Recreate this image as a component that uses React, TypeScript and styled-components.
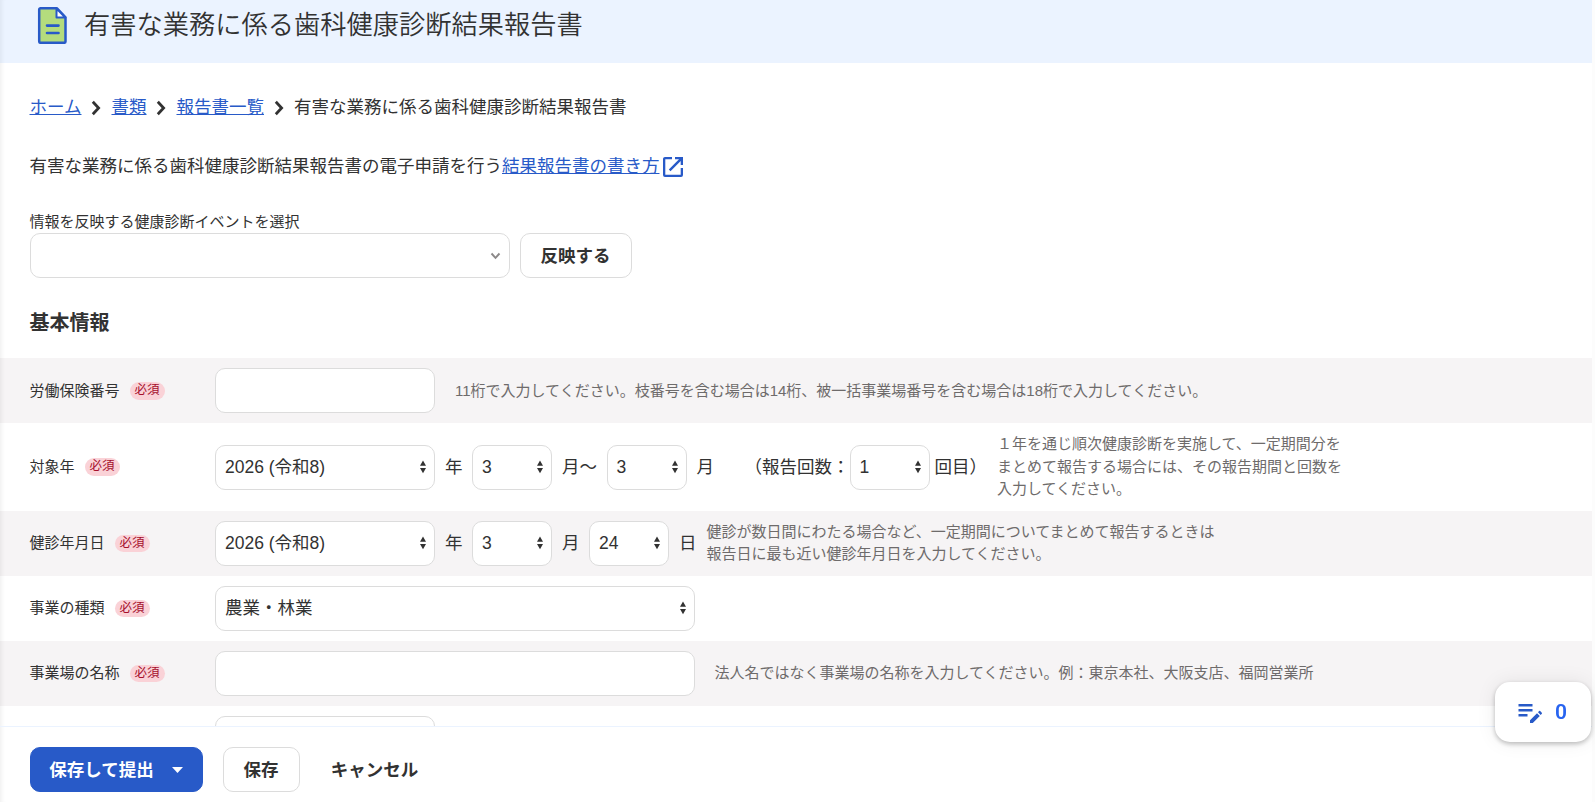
import React from "react";
import styled, { createGlobalStyle, css } from "styled-components";

const GlobalStyle = createGlobalStyle`
  *, *::before, *::after { box-sizing: border-box; }
  html, body { margin: 0; height: 100%; overflow: hidden; background: #fcfcfc; }
  body {
    font-family: "Liberation Sans", "Noto Sans CJK JP", sans-serif;
    font-size: 17.5px;
    color: #323232;
  }
`;

const Page = styled.div`
  display: flex;
  flex-direction: column;
  width: 1592px;
  height: 802px;
  overflow: hidden;
  background: #fff;
  box-shadow: inset 5px 0 5px -4px rgba(0, 0, 0, 0.08);
`;

const Header = styled.header`
  flex: none;
  display: flex;
  align-items: flex-start;
  gap: 16px;
  height: 63px;
  padding: 6px 36px 0;
  background: rgba(55, 135, 255, 0.1);
`;

const Title = styled.h1`
  margin: -1px 0 0;
  font-family: "Noto Sans CJK JP", sans-serif;
  font-size: 26.25px;
  font-weight: 350;
  line-height: 36px;
`;

const Content = styled.main`
  flex: 1;
  min-height: 0;
  overflow: hidden;
`;

const Breadcrumb = styled.nav`
  display: flex;
  align-items: center;
  height: 26px;
  margin: 31px 29.5px 0;
  line-height: 26px;

  svg { margin: 1px 10px 0; }
`;

const Link = styled.a`
  color: #285ac8;
  text-decoration: underline;
`;

const Lead = styled.p`
  display: flex;
  align-items: center;
  height: 26px;
  margin: 33px 29.5px 0;
  line-height: 26px;

  svg { margin: 2px 0 0 1px; }
`;

const EventLabel = styled.label`
  display: block;
  margin: 32px 29.5px 0;
  font-size: 15px;
  line-height: 22px;
`;

const EventRow = styled.div`
  display: flex;
  gap: 10px;
  margin: 0 30px;
`;

const SectionTitle = styled.h2`
  margin: 30px 29.5px 20.4px;
  font-size: 20px;
  font-weight: 700;
  line-height: 30px;
`;

const Row = styled.div<{ $shaded?: boolean }>`
  display: flex;
  align-items: center;
  padding: 10px 0 10px 29.5px;
  background: ${(p) => (p.$shaded ? "rgba(55, 5, 15, 0.042)" : "transparent")};
`;

const RowLabel = styled.div`
  display: flex;
  align-items: center;
  gap: 10px;
  width: 185.5px;
  font-size: 15px;
  line-height: 22px;
`;

const Required = styled.span`
  width: 35px;
  height: 17.5px;
  border-radius: 9px;
  background: #fad2d7;
  color: #a50f2d;
  font-size: 12.5px;
  line-height: 16px;
  text-align: center;
`;

const field = css`
  height: 45px;
  border: 1px solid #dcdcdc;
  border-radius: 10px;
  background: #fff;
`;

const Input = styled.input<{ $width: number }>`
  ${field}
  width: ${(p) => p.$width}px;
  padding: 0 10px;
  outline: none;
`;

const SelectBox = styled.div<{ $width: number }>`
  ${field}
  display: flex;
  align-items: center;
  justify-content: space-between;
  width: ${(p) => p.$width}px;
  padding: 0 7px 0 9px;
  line-height: 26px;
`;

const Unit = styled.span<{ $left?: number; $right?: number }>`
  margin-left: ${(p) => p.$left ?? 10}px;
  margin-right: ${(p) => p.$right ?? 9.5}px;
  line-height: 26px;
  white-space: nowrap;
`;

const Hint = styled.p<{ $left: number }>`
  margin: 0 0 0 ${(p) => p.$left}px;
  color: #6e6b6b;
  font-size: 15px;
  line-height: 22.5px;
`;

const Button = styled.button<{ $kind?: "primary" | "text"; $width: number }>`
  ${field}
  display: flex;
  align-items: center;
  justify-content: center;
  width: ${(p) => p.$width}px;
  padding: 0 1px 3px 0;
  color: #323232;
  font-family: inherit;
  font-size: 17.5px;
  font-weight: 700;
  ${(p) => p.$kind === "primary" && css`
    gap: 18px;
    border-color: #285ac8;
    background: #285ac8;
    color: #fff;

    svg { margin-top: 3px; }
  `}
  ${(p) => p.$kind === "text" && css`
    border-color: transparent;
    background: transparent;
  `}
`;

const Footer = styled.footer`
  flex: none;
  display: flex;
  height: 76px;
  padding: 20px 30px 0;
  border-top: 1px solid #ebf3ff;

  ${Button} + ${Button} { margin-left: 20px; }
`;

const MemoButton = styled.button`
  position: fixed;
  left: 1495px;
  top: 682px;
  display: flex;
  align-items: center;
  gap: 12px;
  width: 96px;
  height: 60px;
  padding: 0 0 0 22px;
  border: 0;
  border-radius: 15px;
  background: #fff;
  box-shadow: 0 0 20px rgba(0, 0, 0, 0.08), 0 2px 5px rgba(0, 0, 0, 0.25);
  color: #2864f0;
  font-family: Roboto, sans-serif;
  font-size: 21px;
  font-weight: 600;

  svg { margin-top: 3px; }
`;

const DocumentIcon = () => (
  <svg width="32" height="38" viewBox="0 0 32 38">
    <path d="M4.500 2.300H21l8.500 9V35.500a1.300 1.300 0 0 1-1.300 1.300H4.500a1.300 1.300 0 0 1-1.300-1.300V3.600a1.300 1.300 0 0 1 1.300-1.300z" fill="#b4dc7d" stroke="#285ac8" strokeWidth="2.500" strokeLinejoin="round" />
    <path d="M20.500 2.500v9h8.800z" fill="#fff" stroke="#285ac8" strokeWidth="2" strokeLinejoin="round" />
    <path d="M11 19.600h11.500M11 27h11.500" stroke="#285ac8" strokeWidth="2.600" strokeLinecap="round" />
  </svg>
);

const Chevron = () => (
  <svg width="10" height="16" viewBox="0 0 10 16">
    <path d="M1.800 1.800L7.600 8l-5.800 6.200" fill="none" stroke="#323232" strokeWidth="2.800" />
  </svg>
);

const ExternalIcon = () => (
  <svg width="24" height="24" viewBox="0 0 24 24" fill="#285ac8">
    <path d="M4 2h7v2.300H4.300v15.400h15.400V13H22v7a2 2 0 0 1-2 2H4a2 2 0 0 1-2-2V4c0-1.100.900-2 2-2zM14 2h8v8h-2.300V6L9.500 16.200 7.800 14.500 18 4.300h-4z" />
  </svg>
);

const DownIcon = () => (
  <svg width="12" height="8" viewBox="0 0 12 8">
    <path d="M1.500 1.500l4 4.300 4-4.300" fill="none" stroke="#8c8989" strokeWidth="1.900" />
  </svg>
);

const SortArrows = () => (
  <svg width="8" height="14" viewBox="0 0 8 14" fill="#323232">
    <path d="M4 .500L7 5.700H1zM4 13.300L1 8.100h6z" />
  </svg>
);

const CaretIcon = () => (
  <svg width="11" height="6" viewBox="0 0 11 6" fill="#fff">
    <path d="M0 0h11L5.500 6z" />
  </svg>
);

const MemoIcon = () => (
  <svg width="26" height="22" viewBox="0 0 26 22" fill="#285ac8">
    <path d="M1.500 1h14v2.500h-14zM1.500 6h14v2.500h-14zM1.500 11h9v2.500h-9zM13 17.200l7-7 2.800 2.800-7 7H13zM21 9.200l1.100-1.100a.8.8 0 0 1 1.100 0l1.600 1.600a.8.8 0 0 1 0 1.100l-1.100 1.100z" />
  </svg>
);

const Select = ({ width, value }: { width: number; value: string }) => (
  <SelectBox $width={width}>
    <span>{value}</span>
    <SortArrows />
  </SelectBox>
);

const Label = ({ text }: { text: string }) => (
  <RowLabel>
    {text}
    <Required>必須</Required>
  </RowLabel>
);

export default function App() {
  return (
    <>
      <GlobalStyle />
      <Page>
        <Header>
          <DocumentIcon />
          <Title>有害な業務に係る歯科健康診断結果報告書</Title>
        </Header>
        <Content>
          <Breadcrumb>
            <Link>ホーム</Link>
            <Chevron />
            <Link>書類</Link>
            <Chevron />
            <Link>報告書一覧</Link>
            <Chevron />
            <span>有害な業務に係る歯科健康診断結果報告書</span>
          </Breadcrumb>
          <Lead>
            有害な業務に係る歯科健康診断結果報告書の電子申請を行う
            <Link>結果報告書の書き方</Link>
            <ExternalIcon />
          </Lead>
          <EventLabel>情報を反映する健康診断イベントを選択</EventLabel>
          <EventRow>
            <SelectBox $width={480}>
              <span />
              <DownIcon />
            </SelectBox>
            <Button $width={112}>反映する</Button>
          </EventRow>
          <SectionTitle>基本情報</SectionTitle>
          <Row $shaded>
            <Label text="労働保険番号" />
            <Input $width={220} />
            <Hint $left={20}>11桁で入力してください。枝番号を含む場合は14桁、被一括事業場番号を含む場合は18桁で入力してください。</Hint>
          </Row>
          <Row>
            <Label text="対象年" />
            <Select width={220} value="2026 (令和8)" />
            <Unit>年</Unit>
            <Select width={80} value="3" />
            <Unit>月～</Unit>
            <Select width={80} value="3" />
            <Unit $right={20.5}>月</Unit>
            <Unit $right={0}>（報告回数：</Unit>
            <Select width={80} value="1" />
            <Unit $left={5} $right={0}>回目）</Unit>
            <Hint $left={10}>
              １年を通じ順次健康診断を実施して、一定期間分を<br />
              まとめて報告する場合には、その報告期間と回数を<br />
              入力してください。
            </Hint>
          </Row>
          <Row $shaded>
            <Label text="健診年月日" />
            <Select width={220} value="2026 (令和8)" />
            <Unit>年</Unit>
            <Select width={80} value="3" />
            <Unit>月</Unit>
            <Select width={80} value="24" />
            <Unit>日</Unit>
            <Hint $left={0.5}>
              健診が数日間にわたる場合など、一定期間についてまとめて報告するときは<br />
              報告日に最も近い健診年月日を入力してください。
            </Hint>
          </Row>
          <Row>
            <Label text="事業の種類" />
            <Select width={480} value="農業・林業" />
          </Row>
          <Row $shaded>
            <Label text="事業場の名称" />
            <Input $width={480} />
            <Hint $left={19.5}>法人名ではなく事業場の名称を入力してください。例：東京本社、大阪支店、福岡営業所</Hint>
          </Row>
          <Row>
            <RowLabel />
            <Input $width={220} />
          </Row>
        </Content>
        <Footer>
          <Button $kind="primary" $width={173}>
            保存して提出
            <CaretIcon />
          </Button>
          <Button $width={77}>保存</Button>
          <Button $kind="text" $width={110}>キャンセル</Button>
        </Footer>
      </Page>
      <MemoButton>
        <MemoIcon />
        0
      </MemoButton>
    </>
  );
}
